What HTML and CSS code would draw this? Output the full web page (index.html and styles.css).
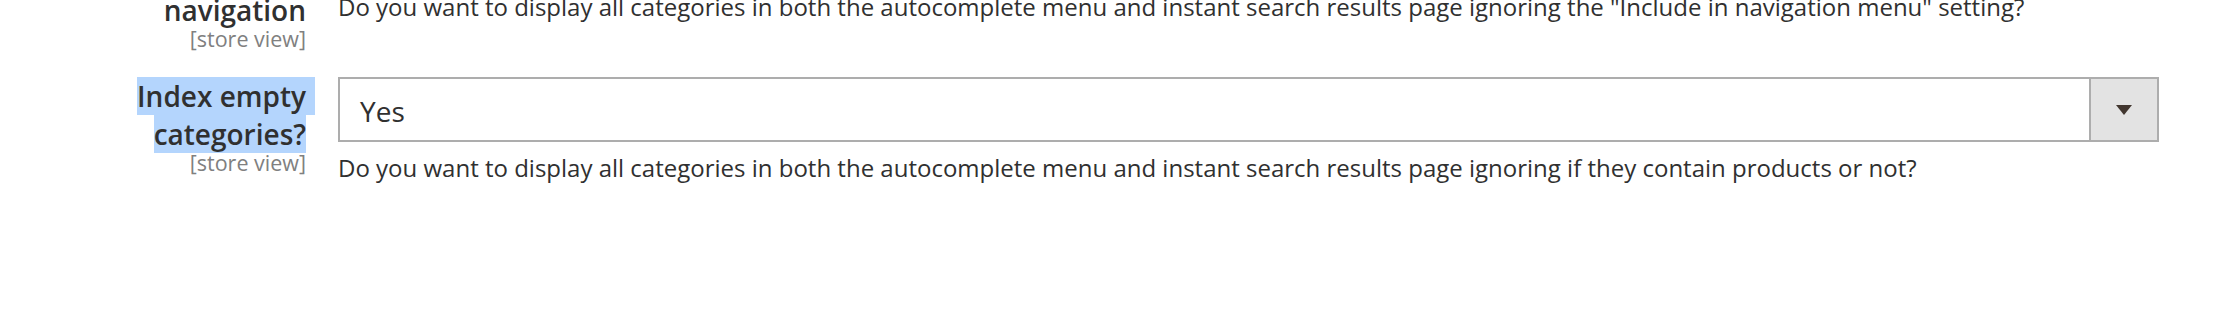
FILE: index.html
```html
<!DOCTYPE html>
<html lang="en">
<head>
<meta charset="utf-8">
<title>Config fields</title>
<link rel="stylesheet" href="styles.css">
</head>
<body>
<div class="fieldset">
  <div class="field field-first">
    <div class="label-col">
      <div class="label">navigation</div>
      <div class="scope">[store view]</div>
    </div>
    <div class="control-col control-first">
      <div class="note">Do you want to display all categories in both the autocomplete menu and instant search results page ignoring the "Include in navigation menu" setting?</div>
    </div>
  </div>
  <div class="field">
    <div class="label-col">
      <div class="label"><span class="sel sel-space">Index empty</span></div>
      <div class="label"><span class="sel">categories?</span></div>
      <div class="scope">[store view]</div>
    </div>
    <div class="control-col">
      <div class="select">
        <div class="select-value">Yes</div>
        <div class="select-button"><span class="arrow"></span></div>
      </div>
      <div class="note note-below">Do you want to display all categories in both the autocomplete menu and instant search results page ignoring if they contain products or not?</div>
    </div>
  </div>
</div>
</body>
</html>
```
FILE: styles.css
```css
html, body {
  margin: 0;
  padding: 0;
  background: #ffffff;
}
body {
  font-family: "Open Sans", "Noto Sans", sans-serif;
  color: #303030;
  overflow: hidden;
  width: 2226px;
  height: 310px;
}
.fieldset {
  display: flex;
  flex-direction: column;
  gap: 28px;
}
.field {
  display: flex;
  gap: 32px;
  align-items: flex-start;
}
.field-first {
  margin-top: -9px;
}
.label-col {
  width: 306px;
  text-align: right;
  flex: none;
}
.label {
  font-size: 28px;
  line-height: 38px;
  font-weight: 600;
  color: #303030;
  white-space: nowrap;
}
.sel {
  background: #b4d5fd;
}
.sel-space {
  box-shadow: 9px 0 0 #b4d5fd;
}
.scope {
  font-size: 21.5px;
  line-height: 20px;
  color: #808080;
}
.control-col {
  width: 1821px;
  flex: none;
}
.control-first {
  padding-top: 2px;
}
.note {
  font-size: 24px;
  line-height: 28px;
  color: #303030;
  white-space: nowrap;
}
.note-below {
  margin-top: 12px;
}
.select {
  display: flex;
  height: 65px;
  box-sizing: border-box;
  border: 2px solid #adadad;
  background: #ffffff;
}
.select-value {
  flex: 1;
  padding: 13px 0 0 20px;
  font-size: 28px;
  line-height: 38px;
  color: #303030;
}
.select-button {
  width: 66px;
  flex: none;
  background: #e3e3e3;
  border-left: 2px solid #adadad;
  display: flex;
  align-items: center;
  justify-content: center;
}
.arrow {
  width: 0;
  height: 0;
  border-left: 8px solid transparent;
  border-right: 8px solid transparent;
  border-top: 10px solid #41362f;
  margin-top: 1px;
}
```
